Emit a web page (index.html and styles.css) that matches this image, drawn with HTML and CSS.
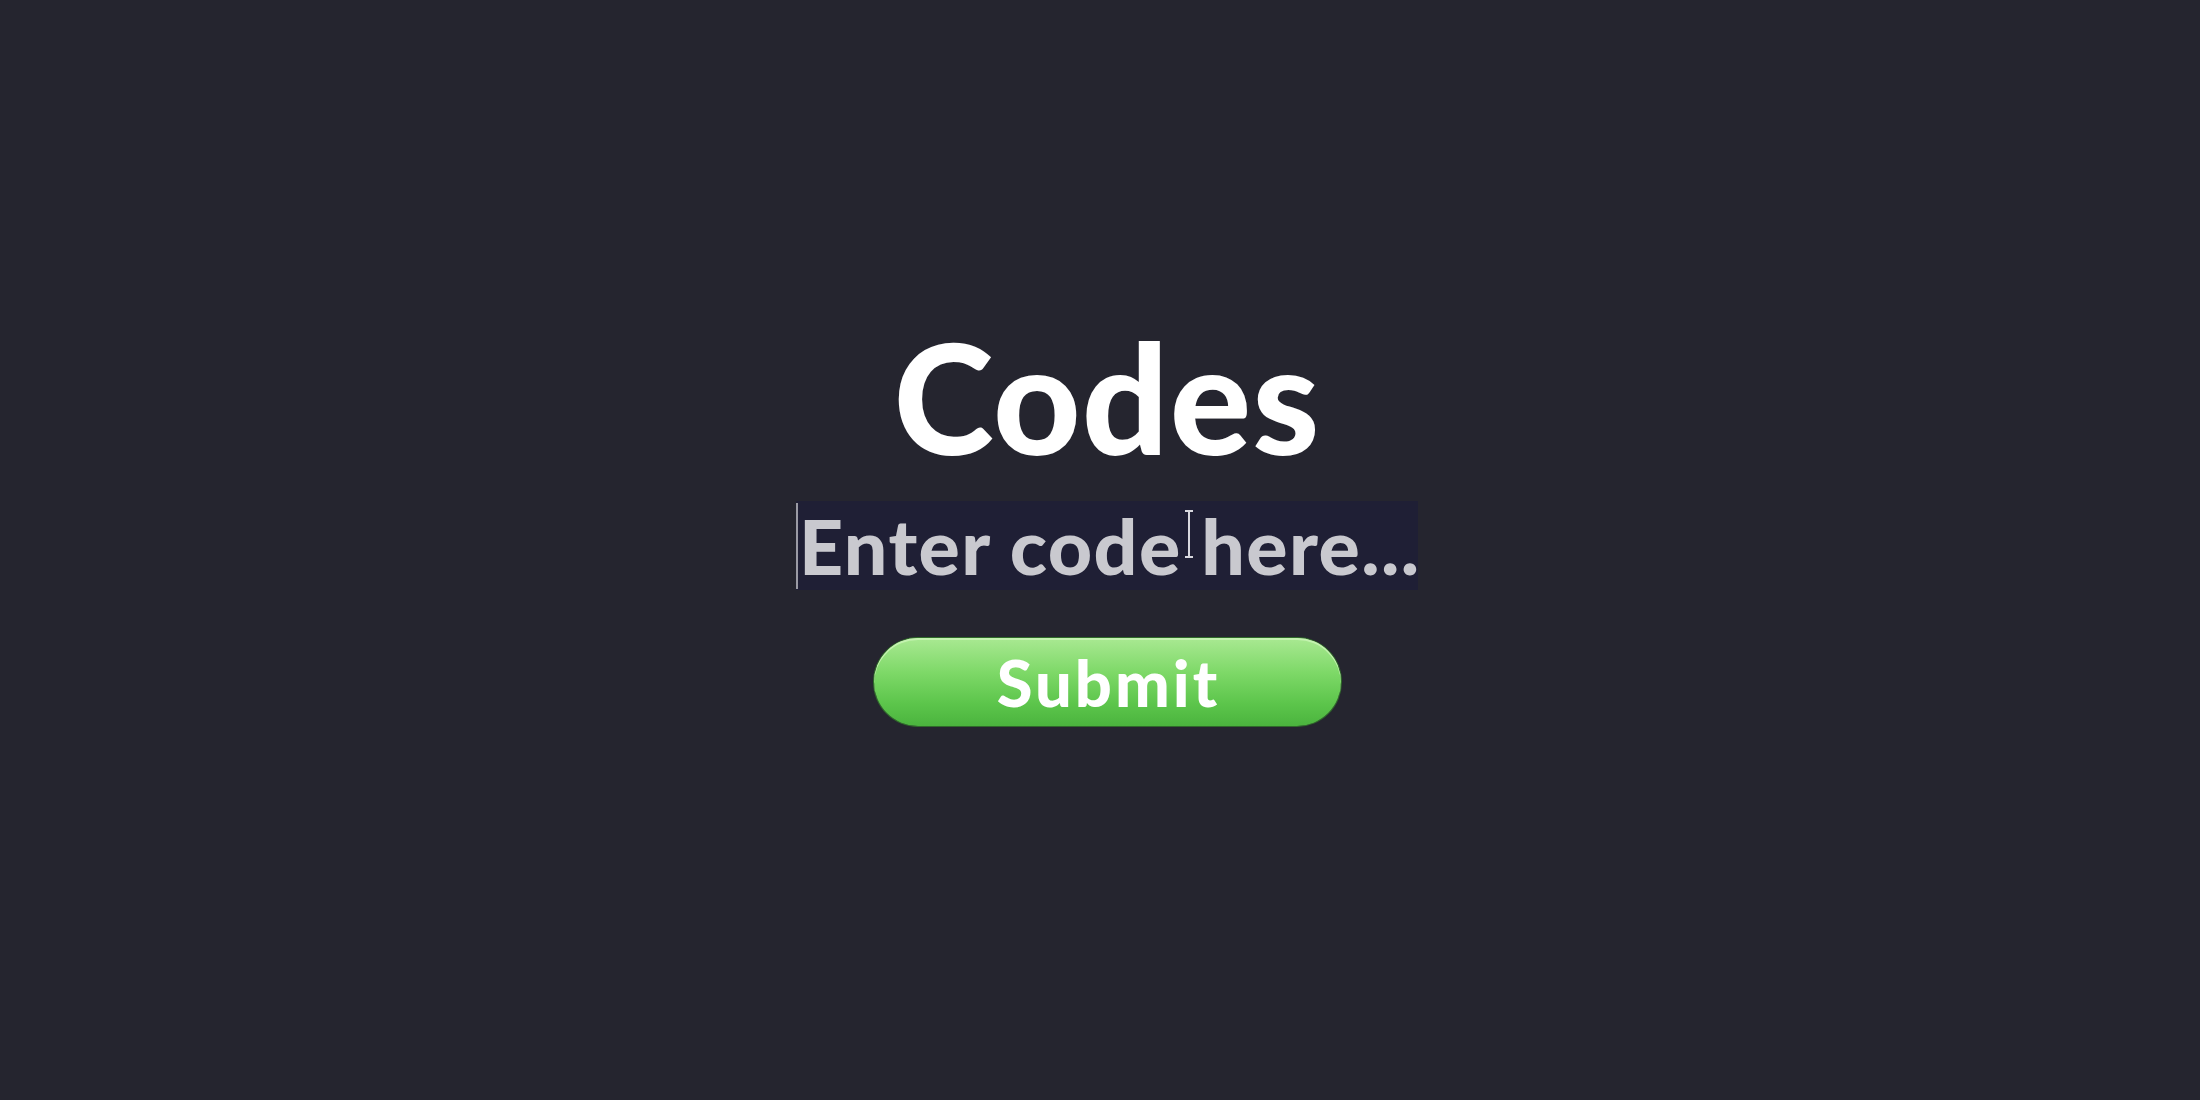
FILE: index.html
```html
<!DOCTYPE html>
<html lang="en">
<head>
<meta charset="utf-8">
<title>Codes</title>
<link rel="stylesheet" href="styles.css">
</head>
<body>
<main class="codes">
  <h1 class="title">Codes</h1>
  <div class="field">
    <span class="caret"></span>
    <span class="placeholder">Enter code here...</span>
    <svg class="ibeam" width="10" height="48" viewBox="0 0 10 48"><path d="M1 1h8M5 1v46M1 47h8" stroke="#d8d8de" stroke-width="2" fill="none"/></svg>
  </div>
  <button class="submit">Submit</button>
</main>
</body>
</html>
```
FILE: styles.css
```css
html, body {
  margin: 0;
  height: 100%;
  background: #25252f;
}
body {
  font-family: Lato, "Liberation Sans", sans-serif;
}
.codes {
  height: 100%;
  display: flex;
  flex-direction: column;
  align-items: center;
  padding-left: 14px;
  box-sizing: border-box;
}
.title {
  margin: 320px 0 0;
  font-size: 152px;
  font-weight: 900;
  line-height: 152px;
  letter-spacing: 1px;
  color: #ffffff;
}
.field {
  position: relative;
  margin-top: 29px;
  width: 622px;
  height: 89px;
  background: #1f1f35;
  display: flex;
  align-items: center;
  box-sizing: border-box;
}
.caret {
  flex: none;
  width: 2px;
  height: 86px;
  background: #9a9aa4;
}
.placeholder {
  flex: none;
  white-space: nowrap;
  margin-left: 1px;
  font-size: 77px;
  font-weight: 900;
  letter-spacing: 1.4px;
  color: #c9c9cf;
  line-height: 1;
}
.ibeam {
  position: absolute;
  left: 388px;
  top: 9px;
}
.submit {
  margin-top: 48px;
  width: 467px;
  height: 88px;
  border: none;
  border-radius: 44px;
  background: linear-gradient(#a9e992 0%, #7dd867 40%, #5cc54b 75%, #4bb43e 100%);
  box-shadow: inset 0 2px 0 #c4f2b0, 0 0 0 1px #2f6a2a;
  color: #ffffff;
  font-family: Lato, "Liberation Sans", sans-serif;
  font-size: 65px;
  font-weight: 900;
  letter-spacing: 3px;
  line-height: 1;
  padding: 0 0 0 3px;
}
```
